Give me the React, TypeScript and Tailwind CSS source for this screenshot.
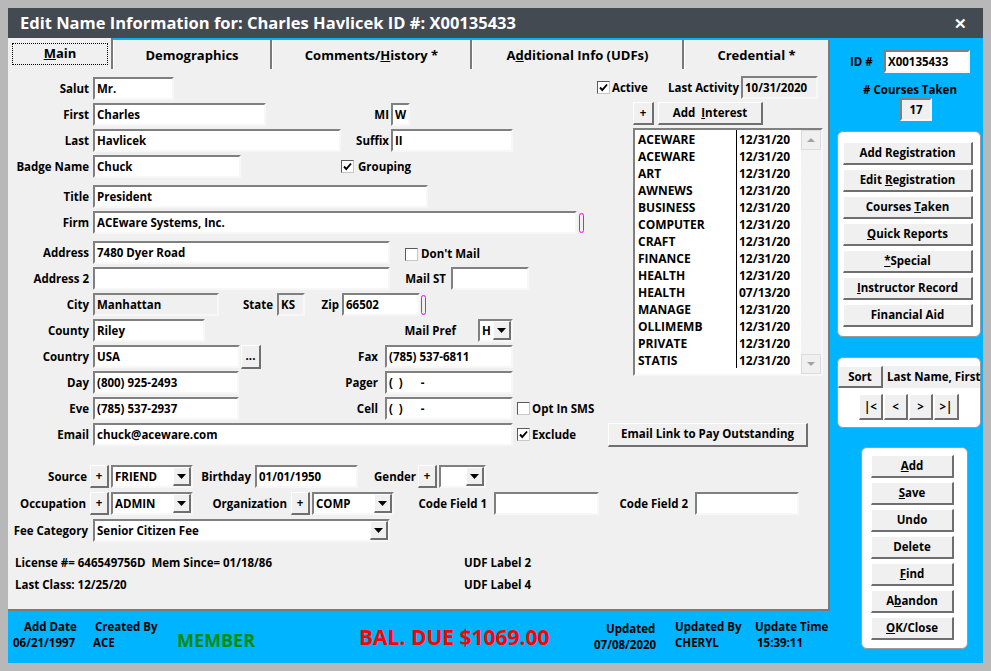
import React from 'react'

const sunken = 'border-2 border-t-[#808080] border-l-[#808080] border-r-[#f7f7f7] border-b-[#f7f7f7]'
const raised = 'border-t border-l border-t-white border-l-white border-r-2 border-b-2 border-r-[#6f6f6f] border-b-[#6f6f6f]'

function Field({ w, value = '', gray = false }: { w: string; value?: string; gray?: boolean }) {
  return (
    <div className={`${w} h-[23px] shrink-0 ${sunken} ${gray ? 'bg-[#f0f0f0]' : 'bg-white'} flex items-center pl-[2px] overflow-hidden`}>
      <span className="whitespace-pre">{value}</span>
    </div>
  )
}

function Label({ w, children, pr = 'pr-[4px]' }: { w: string; children?: React.ReactNode; pr?: string }) {
  return <div className={`${w} ${pr} shrink-0 text-right`}>{children}</div>
}

function Btn({ w, h = 'h-[23px]', children }: { w: string; h?: string; children: React.ReactNode }) {
  return (
    <div className={`${w} ${h} shrink-0 ${raised} bg-[#f0f0f0] flex items-center justify-center`}>
      <span>{children}</span>
    </div>
  )
}

function Arrow() {
  return (
    <svg width="9" height="5" viewBox="0 0 9 5">
      <path d="M0 0h9L4.5 5z" fill="#000" />
    </svg>
  )
}

function Combo({ w, value = '' }: { w: string; value?: string }) {
  return (
    <div className={`${w} h-[23px] shrink-0 ${sunken} bg-white flex items-center`}>
      <span className="flex-1 pl-[2px]">{value}</span>
      <div className={`w-[18px] h-full ${raised} bg-[#f0f0f0] flex items-center justify-center`}>
        <Arrow />
      </div>
    </div>
  )
}

function Check({ on = false }: { on?: boolean }) {
  return (
    <div className="w-[13px] h-[13px] shrink-0 bg-white border border-t-[#5a5a5a] border-l-[#5a5a5a] border-r-[#c8c8c8] border-b-[#c8c8c8] flex items-center justify-center">
      {on && (
        <svg width="9" height="9" viewBox="0 0 9 9">
          <path d="M1 4.5L3.3 7L8 1.5" stroke="#000" strokeWidth="1.9" fill="none" />
        </svg>
      )}
    </div>
  )
}

function Mark() {
  return <div className="w-[5px] h-[20px] shrink-0 border border-[#ff00ff] rounded-[3px]" />
}

function Row({ mt = '', children }: { mt?: string; children: React.ReactNode }) {
  return <div className={`flex items-center h-[23px] ${mt}`}>{children}</div>
}

const interests = [
  ['ACEWARE', '12/31/20'],
  ['ACEWARE', '12/31/20'],
  ['ART', '12/31/20'],
  ['AWNEWS', '12/31/20'],
  ['BUSINESS', '12/31/20'],
  ['COMPUTER', '12/31/20'],
  ['CRAFT', '12/31/20'],
  ['FINANCE', '12/31/20'],
  ['HEALTH', '12/31/20'],
  ['HEALTH', '07/13/20'],
  ['MANAGE', '12/31/20'],
  ['OLLIMEMB', '12/31/20'],
  ['PRIVATE', '12/31/20'],
  ['STATIS', '12/31/20'],
]

function Tabs() {
  const tab = 'h-[29px] bg-[#f0f0f0] border-l border-l-white border-r-2 border-r-[#7a7a7a] flex items-center justify-center pt-[1px] text-[13px]'
  return (
    <div className="h-[31px] flex items-end">
      <div className="w-[105px] h-[31px] bg-[#f0f0f0] border-r-2 border-r-[#7a7a7a] flex items-center pl-[4px] text-[13px]">
        <div className="w-[96px] h-[22px] border border-dotted border-black flex items-center justify-center">
          <span><u>M</u>ain</span>
        </div>
      </div>
      <div className={`${tab} w-[159px]`}><span>Demographics</span></div>
      <div className={`${tab} w-[200px]`}><span>Comments/<u>H</u>istory *</span></div>
      <div className={`${tab} w-[212px]`}><span>A<u>d</u>ditional Info (UDFs)</span></div>
      <div className={`${tab} w-[146px] border-r-0`}><span>Credential *</span></div>
    </div>
  )
}

function InterestList() {
  return (
    <div className={`ml-[43px] mt-[3px] w-[190px] h-[248px] ${sunken} bg-white flex text-[12px]`}>
      <div className="flex-1 relative pt-[1px]">
        <div className="absolute left-[101px] top-0 h-[238px] w-px bg-black" />
        {interests.map(([n, d], i) => (
          <div key={i} className="flex h-[17px] items-center">
            <span className="w-[101px] pl-[3px]">{n}</span>
            <span className="pl-[3px]">{d}</span>
          </div>
        ))}
      </div>
      <div className="w-[20px] h-full bg-[#f3f3f3] flex flex-col justify-between">
        <div className="h-[20px] bg-[#f0f0f0] border border-[#dcdcdc] flex items-center justify-center">
          <svg width="8" height="4" viewBox="0 0 8 4"><path d="M0 4h8L4 0z" fill="#a3a3a3" /></svg>
        </div>
        <div className="h-[20px] bg-[#f0f0f0] border border-[#dcdcdc] flex items-center justify-center">
          <svg width="8" height="4" viewBox="0 0 8 4"><path d="M0 0h8L4 4z" fill="#a3a3a3" /></svg>
        </div>
      </div>
    </div>
  )
}

function MainPanel() {
  return (
    <div className="h-[542px] shrink-0 bg-[#f0f0f0] border-r-2 border-b-2 border-r-[#7a7a7a] border-b-[#7a7a7a] pt-[7px]">
      <div className="flex">
        <div className="w-[582px] shrink-0 pt-[1px]">
          <Row>
            <Label w="w-[85px]">Salut</Label>
            <Field w="w-[81px]" value="Mr." />
          </Row>
          <Row mt="mt-[3px]">
            <Label w="w-[85px]">First</Label>
            <Field w="w-[173px]" value="Charles" />
            <Label w="w-[125px]" pr="pr-[2px]">MI</Label>
            <Field w="w-[19px]" value="W" />
          </Row>
          <Row mt="mt-[3px]">
            <Label w="w-[85px]">Last</Label>
            <Field w="w-[248px]" value="Havlicek" />
            <Label w="w-[50px]" pr="pr-[2px]">Suffix</Label>
            <Field w="w-[122px]" value="II" />
          </Row>
          <Row mt="mt-[3px]">
            <Label w="w-[85px]">Badge Name</Label>
            <Field w="w-[148px]" value="Chuck" />
            <div className="w-[100px] shrink-0" />
            <Check on />
            <span className="ml-[4px]">Grouping</span>
          </Row>
          <Row mt="mt-[7px]">
            <Label w="w-[85px]">Title</Label>
            <Field w="w-[335px]" value="President" />
          </Row>
          <Row mt="mt-[3px]">
            <Label w="w-[85px]">Firm</Label>
            <Field w="w-[484px]" value="ACEware Systems, Inc." />
            <div className="ml-[2px]"><Mark /></div>
          </Row>
          <Row mt="mt-[7px]">
            <Label w="w-[85px]">Address</Label>
            <Field w="w-[297px]" value="7480 Dyer Road" />
            <div className="ml-[15px] mt-[3px] flex items-center">
              <Check />
              <span className="ml-[3px]">Don't Mail</span>
            </div>
          </Row>
          <Row mt="mt-[3px]">
            <Label w="w-[85px]">Address 2</Label>
            <Field w="w-[297px]" />
            <Label w="w-[61px]" pr="pr-[5px]">Mail ST</Label>
            <Field w="w-[78px]" />
          </Row>
          <Row mt="mt-[3px]">
            <Label w="w-[85px]">City</Label>
            <Field w="w-[126px]" value="Manhattan" gray />
            <Label w="w-[58px]">State</Label>
            <Field w="w-[28px]" value="KS" gray />
            <Label w="w-[37px]" pr="pr-[3px]">Zip</Label>
            <Field w="w-[78px]" value="66502" />
            <div className="ml-[1px]"><Mark /></div>
          </Row>
          <Row mt="mt-[3px]">
            <Label w="w-[85px]">County</Label>
            <Field w="w-[112px]" value="Riley" />
            <Label w="w-[273px]" pr="pr-[22px]">Mail Pref</Label>
            <Combo w="w-[35px]" value="H" />
          </Row>
          <Row mt="mt-[3px]">
            <Label w="w-[85px]">Country</Label>
            <Field w="w-[147px]" value="USA" />
            <div className="ml-[1px]">
              <Btn w="w-[20px]" h="h-[24px]">...</Btn>
            </div>
            <Label w="w-[124px]" pr="pr-[7px]">Fax</Label>
            <Field w="w-[128px]" value="(785) 537-6811" />
          </Row>
          <Row mt="mt-[3px]">
            <Label w="w-[85px]">Day</Label>
            <Field w="w-[146px]" value="(800) 925-2493" />
            <Label w="w-[146px]" pr="pr-[7px]">Pager</Label>
            <Field w="w-[128px]" value="(  )      -" />
          </Row>
          <Row mt="mt-[3px]">
            <Label w="w-[85px]">Eve</Label>
            <Field w="w-[146px]" value="(785) 537-2937" />
            <Label w="w-[146px]" pr="pr-[7px]">Cell</Label>
            <Field w="w-[128px]" value="(  )      -" />
            <div className="ml-[4px] flex items-center">
              <Check />
              <span className="ml-[2px]">Opt In SMS</span>
            </div>
          </Row>
        </div>
        <div className="w-[240px] shrink-0">
          <div className="flex items-center h-[23px]">
            <div className="ml-[7px]"><Check on /></div>
            <span className="w-[58px] pl-[2px]">Active</span>
            <span className="w-[73px]">Last Activity</span>
            <Field w="w-[77px]" value="10/31/2020" gray />
          </div>
          <div className="flex items-center ml-[43px] mt-[3px]">
            <Btn w="w-[21px]">+</Btn>
            <div className="ml-[4px]">
              <Btn w="w-[105px]">Add&nbsp;&nbsp;<u>I</u>nterest</Btn>
            </div>
          </div>
          <InterestList />
        </div>
      </div>
      <Row mt="mt-[3px]">
        <Label w="w-[85px]">Email</Label>
        <Field w="w-[420px]" value="chuck@aceware.com" />
        <div className="ml-[4px]"><Check on /></div>
        <span className="w-[78px] pl-[2px]">Exclude</span>
        <Btn w="w-[200px]" h="h-[24px]">Email Link to Pay Outstanding</Btn>
      </Row>
      <Row mt="mt-[19px]">
        <Label w="w-[82px]" pr="pr-[3px]">Source</Label>
        <Btn w="w-[19px]">+</Btn>
        <div className="ml-[2px]"><Combo w="w-[82px]" value="FRIEND" /></div>
        <Label w="w-[62px]">Birthday</Label>
        <Field w="w-[103px]" value="01/01/1950" />
        <Label w="w-[60px]" pr="pr-[2px]">Gender</Label>
        <Btn w="w-[19px]">+</Btn>
        <div className="ml-[2px]"><Combo w="w-[47px]" /></div>
      </Row>
      <Row mt="mt-[4px]">
        <Label w="w-[82px]">Occupation</Label>
        <Btn w="w-[19px]">+</Btn>
        <div className="ml-[2px]"><Combo w="w-[82px]" value="ADMIN" /></div>
        <Label w="w-[98px]">Organization</Label>
        <Btn w="w-[19px]">+</Btn>
        <div className="ml-[2px]"><Combo w="w-[82px]" value="COMP" /></div>
        <Label w="w-[100px]" pr="pr-[7px]">Code Field 1</Label>
        <Field w="w-[105px]" />
        <Label w="w-[96px]" pr="pr-[7px]">Code Field 2</Label>
        <Field w="w-[104px]" />
      </Row>
      <Row mt="mt-[4px]">
        <Label w="w-[85px]" pr="pr-[5px]">Fee Category</Label>
        <Combo w="w-[297px]" value="Senior Citizen Fee" />
      </Row>
      <div className="flex mt-[13px] h-[16px] items-center">
        <span className="w-[456px] pl-[7px] whitespace-pre">License #= 646549756D  Mem Since= 01/18/86</span>
        <span>UDF Label 2</span>
      </div>
      <div className="flex mt-[6px] h-[16px] items-center">
        <span className="w-[456px] pl-[7px]">Last Class: 12/25/20</span>
        <span>UDF Label 4</span>
      </div>
    </div>
  )
}

function BottomBar() {
  return (
    <div className="flex-1 flex leading-[16px]">
      <div className="w-[80px] pt-[8px] flex flex-col">
        <span className="pl-[16px]">Add Date</span>
        <span className="pl-[5px]">06/21/1997</span>
      </div>
      <div className="w-[82px] pt-[8px] flex flex-col">
        <span className="pl-[7px]">Created By</span>
        <span className="pl-[5px]">ACE</span>
      </div>
      <div className="w-[182px] flex items-center pt-[6px] pl-[7px] text-[18px] text-[#0a8a0a]">MEMBER</div>
      <div className="w-[238px] flex items-center pl-[7px] text-[21px] text-[#ff0000]">BAL. DUE $1069.00</div>
      <div className="w-[80px] pt-[10px] flex flex-col">
        <span className="pl-[16px]">Updated</span>
        <span className="pl-[4px]">07/08/2020</span>
      </div>
      <div className="w-[80px] pt-[8px] flex flex-col">
        <span className="pl-[5px]">Updated By</span>
        <span className="pl-[5px]">CHERYL</span>
      </div>
      <div className="w-[80px] pt-[8px] flex flex-col">
        <span className="pl-[5px]">Update Time</span>
        <span className="pl-[7px]">15:39:11</span>
      </div>
    </div>
  )
}

function SideColumn() {
  const group = 'bg-white border border-[#9a9a9a] rounded-[6px]'
  return (
    <div className="w-[153px] shrink-0 flex flex-col">
      <div className="flex items-center mt-[12px] pl-[20px]">
        <span className="w-[34px]">ID #</span>
        <Field w="w-[86px]" value="X00135433" />
      </div>
      <div className="mt-[9px] h-[16px] flex items-center justify-center pl-[7px]">
        <span># Courses Taken</span>
      </div>
      <div className="ml-[70px]">
        <div className={`w-[32px] h-[23px] ${sunken} bg-[#f0f0f0] flex items-center justify-center`}>17</div>
      </div>
      <div className={`ml-[7px] mt-[10px] w-[144px] h-[206px] ${group} pt-[10px] pl-[5px] flex flex-col gap-[4px]`}>
        <Btn w="w-[130px]">Add Registration</Btn>
        <Btn w="w-[130px]">Edit <u>R</u>egistration</Btn>
        <Btn w="w-[130px]">Courses <u>T</u>aken</Btn>
        <Btn w="w-[130px]"><u>Q</u>uick Reports</Btn>
        <Btn w="w-[130px]"><u>*</u>Special</Btn>
        <Btn w="w-[130px]"><u>I</u>nstructor Record</Btn>
        <Btn w="w-[130px]">Financial Aid</Btn>
      </div>
      <div className={`ml-[7px] mt-[20px] w-[144px] h-[71px] ${group} pt-[8px]`}>
        <div className="flex">
          <Btn w="w-[45px]" h="h-[22px]">Sort</Btn>
          <div className="w-[97px] h-[22px] bg-[#f0f0f0] flex items-center pl-[4px]">Last Name, First</div>
        </div>
        <div className="flex ml-[21px] mt-[6px] gap-[1px]">
          <Btn w="w-[24px]" h="h-[26px]">|&lt;</Btn>
          <Btn w="w-[24px]" h="h-[26px]">&lt;</Btn>
          <Btn w="w-[24px]" h="h-[26px]">&gt;</Btn>
          <Btn w="w-[25px]" h="h-[26px]">&gt;|</Btn>
        </div>
      </div>
      <div className={`ml-[31px] mt-[19px] w-[107px] h-[202px] ${group} pt-[7px] pl-[9px] flex flex-col gap-[4px]`}>
        <Btn w="w-[83px]"><u>A</u>dd</Btn>
        <Btn w="w-[83px]"><u>S</u>ave</Btn>
        <Btn w="w-[83px]">Undo</Btn>
        <Btn w="w-[83px]">Delete</Btn>
        <Btn w="w-[83px]"><u>F</u>ind</Btn>
        <Btn w="w-[83px]">A<u>b</u>andon</Btn>
        <Btn w="w-[83px]"><u>O</u>K/Close</Btn>
      </div>
    </div>
  )
}

export default function App() {
  return (
    <div className="w-[991px] h-[671px] bg-[#b8b8b8] p-[8px] font-['Open_Sans',sans-serif] text-[11.5px] font-bold text-black leading-none whitespace-nowrap">
      <div className="w-[975px] h-[655px] flex flex-col">
        <div className="h-[30px] shrink-0 bg-[#444a51] flex items-center justify-between pl-[12px] pr-[16px] text-white">
          <span className="text-[16.5px]">Edit Name Information for: Charles Havlicek ID #: X00135433</span>
          <span className="text-[15px]">✕</span>
        </div>
        <div className="flex-1 min-h-0 flex bg-[#00b4ff]">
          <div className="w-[822px] shrink-0 flex flex-col">
            <Tabs />
            <MainPanel />
            <BottomBar />
          </div>
          <SideColumn />
        </div>
      </div>
    </div>
  )
}
